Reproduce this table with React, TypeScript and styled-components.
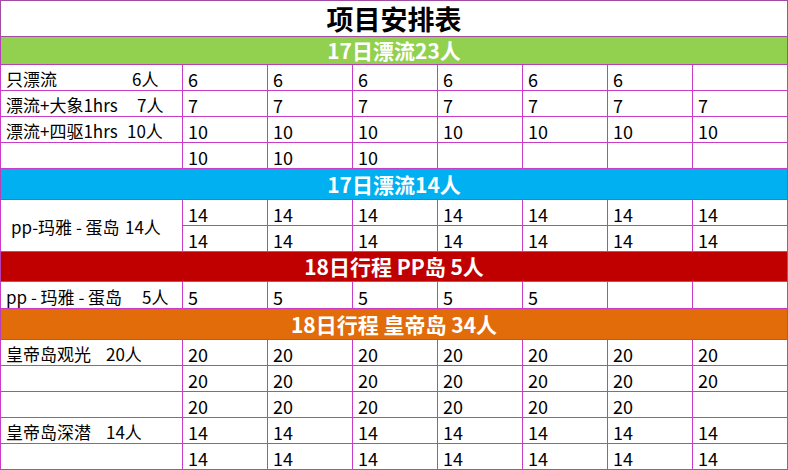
import styled, { createGlobalStyle } from "styled-components";

const GlobalStyle = createGlobalStyle`
  html, body {
    margin: 0;
    padding: 0;
    background: #ffffff;
  }
  body {
    font-family: "Noto Sans CJK SC", "Noto Sans", sans-serif;
  }
`;

const Sheet = styled.table`
  width: 787px;
  table-layout: fixed;
  border-collapse: collapse;
  color: #000000;
  font-size: 17px;
`;

const Row = styled.tr<{ $height: number }>`
  height: ${(p) => p.$height}px;
`;

const TitleCell = styled.td`
  border: 1px solid #a24ca4;
  text-align: center;
  font-size: 27px;
  font-weight: 700;
  line-height: 1;
  padding: 0;
`;

const HeaderCell = styled.td<{ $bg: string }>`
  background: ${(p) => p.$bg};
  border: 1px solid #b640b8;
  color: #ffffff;
  text-align: center;
  font-size: 21px;
  font-weight: 700;
  line-height: 1;
  padding: 0;
`;

const LabelCell = styled.td<{ $indent: number }>`
  border: 1px solid #c83cc8;
  padding: 2px 0 0 ${(p) => p.$indent}px;
  white-space: nowrap;
  line-height: 1;
  vertical-align: middle;
  overflow: hidden;
`;

const Name = styled.span<{ $width: number }>`
  display: inline-block;
  width: ${(p) => p.$width}px;
  white-space: pre;
`;

const NumCell = styled.td`
  border: 1px solid #c83cc8;
  padding: 3px 0 0 5px;
  font-size: 18px;
  line-height: 1;
  vertical-align: middle;
`;

type DataRow = {
  name?: string;
  count?: string;
  nameWidth?: number;
  indent?: number;
  span?: number;
  skipLabel?: boolean;
  values: (number | null)[];
  height?: number;
};

type Section = {
  title: string;
  color: string;
  height: number;
  rows: DataRow[];
};

const SECTIONS: Section[] = [
  {
    title: "17日漂流23人",
    color: "#92d050",
    height: 28,
    rows: [
      { name: "只漂流", count: "6人", nameWidth: 126, values: [6, 6, 6, 6, 6, 6, null] },
      { name: "漂流+大象1hrs", count: "7人", nameWidth: 131, values: [7, 7, 7, 7, 7, 7, 7] },
      { name: "漂流+四驱1hrs", count: "10人", nameWidth: 121, values: [10, 10, 10, 10, 10, 10, 10] },
      { values: [10, 10, 10, null, null, null, null] },
    ],
  },
  {
    title: "17日漂流14人",
    color: "#00b0f0",
    height: 31,
    rows: [
      { name: "pp-玛雅 - 蛋岛", count: "14人", nameWidth: 114, indent: 10, span: 2, values: [14, 14, 14, 14, 14, 14, 14] },
      { skipLabel: true, values: [14, 14, 14, 14, 14, 14, 14] },
    ],
  },
  {
    title: "18日行程 PP岛 5人",
    color: "#c00000",
    height: 30,
    rows: [
      { name: "pp - 玛雅 - 蛋岛", count: "5人", nameWidth: 136, values: [5, 5, 5, 5, 5, null, null], height: 27 },
    ],
  },
  {
    title: "18日行程 皇帝岛 34人",
    color: "#e26b0a",
    height: 31,
    rows: [
      { name: "皇帝岛观光", count: "20人", nameWidth: 100, values: [20, 20, 20, 20, 20, 20, 20] },
      { values: [20, 20, 20, 20, 20, 20, 20] },
      { values: [20, 20, 20, 20, 20, 20, null] },
      { name: "皇帝岛深潜", count: "14人", nameWidth: 100, values: [14, 14, 14, 14, 14, 14, 14] },
      { values: [14, 14, 14, 14, 14, 14, 14] },
    ],
  },
];

export default function App() {
  return (
    <>
      <GlobalStyle />
      <Sheet>
        <colgroup>
          <col style={{ width: 182 }} />
          {[85, 85, 85, 85, 85, 85, 95].map((w, i) => (
            <col key={i} style={{ width: w }} />
          ))}
        </colgroup>
        <tbody>
          <Row $height={36}>
            <TitleCell colSpan={8}>项目安排表</TitleCell>
          </Row>
          {SECTIONS.map((section) => [
            <Row key={section.title} $height={section.height}>
              <HeaderCell colSpan={8} $bg={section.color}>
                {section.title}
              </HeaderCell>
            </Row>,
            ...section.rows.map((row, r) => (
              <Row key={`${section.title}-${r}`} $height={row.height ?? 26}>
                {!row.skipLabel && (
                  <LabelCell rowSpan={row.span ?? 1} $indent={row.indent ?? 5}>
                    {row.name && <Name $width={row.nameWidth ?? 0}>{row.name}</Name>}
                    {row.count}
                  </LabelCell>
                )}
                {row.values.map((v, i) => (
                  <NumCell key={i}>{v ?? ""}</NumCell>
                ))}
              </Row>
            )),
          ])}
        </tbody>
      </Sheet>
    </>
  );
}
